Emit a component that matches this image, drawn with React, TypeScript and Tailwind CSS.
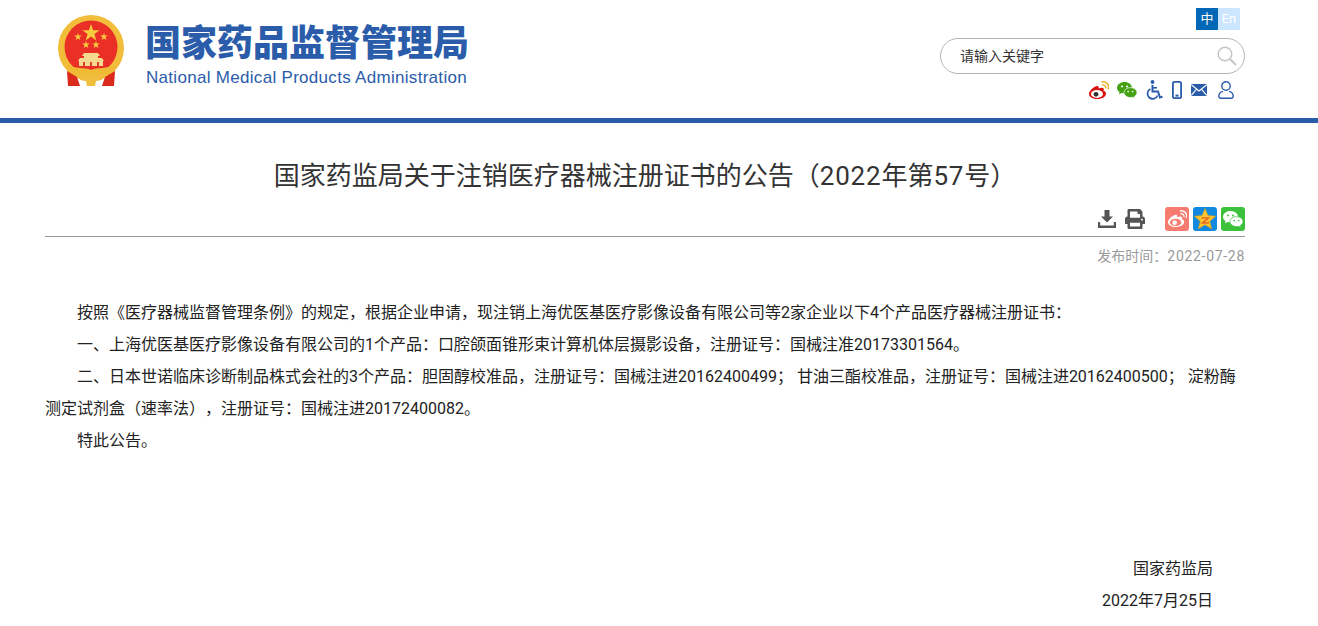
import { FaPrint } from 'react-icons/fa';

const cjk = "font-['Roboto','Noto_Sans_CJK_SC',sans-serif]";

function Emblem() {
  return (
    <svg width="68" height="74" viewBox="0 0 68 74" className="shrink-0">
      <circle cx="34" cy="33" r="33" fill="#f2bd3b" />
      <circle cx="34" cy="32" r="26.5" fill="#ea2f27" />
      <path d="M34 9 L36.1 15.2 L42.6 15.2 L37.4 19.1 L39.3 25.4 L34 21.6 L28.7 25.4 L30.6 19.1 L25.4 15.2 L31.9 15.2 Z" fill="#f7cb3f" />
      <path d="M21 18 l0.9 2.6 2.8 0 -2.2 1.7 0.8 2.7 -2.3-1.6 -2.3 1.6 0.8-2.7 -2.2-1.7 2.8 0 Z" fill="#f7cb3f" />
      <path d="M47 18 l0.9 2.6 2.8 0 -2.2 1.7 0.8 2.7 -2.3-1.6 -2.3 1.6 0.8-2.7 -2.2-1.7 2.8 0 Z" fill="#f7cb3f" />
      <path d="M29 26 l0.9 2.6 2.8 0 -2.2 1.7 0.8 2.7 -2.3-1.6 -2.3 1.6 0.8-2.7 -2.2-1.7 2.8 0 Z" fill="#f7cb3f" />
      <path d="M39 26 l0.9 2.6 2.8 0 -2.2 1.7 0.8 2.7 -2.3-1.6 -2.3 1.6 0.8-2.7 -2.2-1.7 2.8 0 Z" fill="#f7cb3f" />
      <path d="M27 38 h14 l2 3 h-2 v2 h4 l2 3 h-1 v5 h-24 v-5 h-1 l2-3 h4 v-2 h-2 Z" fill="#f5d98e" />
      <rect x="26" y="47" width="2" height="4" fill="#d9412c" />
      <rect x="33" y="47" width="2" height="4" fill="#d9412c" />
      <rect x="40" y="47" width="2" height="4" fill="#d9412c" />
      <path d="M9 50 C18 54 28 52 34 55 C40 52 50 54 59 50 L57 57 C50 62 42 58 34 61 C26 58 18 62 11 57 Z" fill="#f0ba35" />
      <path d="M10 56 L20 62 L23 71 L11 71 Z" fill="#d92a1c" />
      <path d="M58 56 L48 62 L45 71 L57 71 Z" fill="#d92a1c" />
      <path d="M20 58 L28 60 L34 58 L40 60 L48 58 L45 65 L39 66 L38 71 H30 L29 66 L23 65 Z" fill="#f0bd3c" />
    </svg>
  );
}

function WeiboIcon({ body, eye, pupil, arc, size = 20 }: { body: string; eye: string; pupil: string; arc: string; size?: number }) {
  return (
    <svg width={size} height={size * 0.9} viewBox="0 0 20 18" className="shrink-0">
      <path d="M8 5 C4 6 0 10 0 13 C0 16 4 18 8.5 18 C13.5 18 17 15.5 17 12.5 C17 11 15.5 10 14.5 9.8 C15 8.5 15 7.5 14 7 C13 6.4 11 7 9.5 7.6 C10 6 9.8 4.7 8 5 Z" fill={body} />
      <ellipse cx="8" cy="13" rx="6" ry="3.9" fill={eye} />
      <circle cx="7" cy="13.3" r="2.4" fill={pupil} />
      <path d="M13 4 C15.2 3.4 17.4 5.4 16.8 7.6" fill="none" stroke={arc} strokeWidth="1.3" />
      <path d="M12.6 1 C17 0.2 20.8 3.6 19.3 8.2" fill="none" stroke={arc} strokeWidth="1.5" />
    </svg>
  );
}

function WechatIcon({ body, eye, size = 20 }: { body: string; eye: string; size?: number }) {
  return (
    <svg width={size} height={size * 0.85} viewBox="0 0 20 17" className="shrink-0">
      <path d="M7.5 0 C3.4 0 0 2.6 0 5.8 C0 7.6 1 9.1 2.6 10.2 L2 12.4 L4.5 11.1 C5.5 11.4 6.5 11.6 7.5 11.6 C11.6 11.6 15 9 15 5.8 C15 2.6 11.6 0 7.5 0 Z" fill={body} />
      <circle cx="5" cy="4.5" r="1" fill={eye} />
      <circle cx="10" cy="4.5" r="1" fill={eye} />
      <path d="M13.5 5.6 C10 5.6 7 7.8 7 10.6 C7 13.4 10 15.6 13.5 15.6 C14.2 15.6 14.9 15.5 15.6 15.3 L17.8 16.6 L17.3 14.6 C18.9 13.6 20 12.2 20 10.6 C20 7.8 17 5.6 13.5 5.6 Z" fill={body} stroke={eye} strokeWidth="0.7" />
      <circle cx="11.2" cy="9.5" r="0.85" fill={eye} />
      <circle cx="15.6" cy="9.5" r="0.85" fill={eye} />
    </svg>
  );
}

function AccessIcon() {
  return (
    <svg width="17" height="20" viewBox="0 0 17 20" fill="none" stroke="#2a5caa" className="shrink-0">
      <circle cx="6.5" cy="2" r="1.9" fill="#2a5caa" stroke="none" />
      <path d="M6.5 5 V11.5 H12 L14 17.5 L16.5 16.6" strokeWidth="2" />
      <path d="M6.5 7.8 H11" strokeWidth="1.6" />
      <path d="M4.4 9 A5.2 5.2 0 1 0 11.6 15.5" strokeWidth="1.7" />
    </svg>
  );
}

function PhoneIcon() {
  return (
    <svg width="10" height="18" viewBox="0 0 10 18" className="shrink-0">
      <rect x="0.9" y="0.9" width="8.2" height="16.2" rx="1.6" fill="none" stroke="#2a5caa" strokeWidth="1.8" />
      <rect x="3.5" y="13.6" width="3" height="2" fill="#2a5caa" />
    </svg>
  );
}

function MailIcon() {
  return (
    <svg width="16" height="12" viewBox="0 0 16 12" className="shrink-0">
      <rect width="16" height="12" rx="0.8" fill="#2a5caa" />
      <path d="M0.3 0.8 L8 7 L15.7 0.8 M0.3 11.3 L5.6 5.2 M15.7 11.3 L10.4 5.2" fill="none" stroke="#fff" strokeWidth="1.1" />
    </svg>
  );
}

function UserIcon() {
  return (
    <svg width="16" height="18" viewBox="0 0 16 18" fill="none" stroke="#2a5caa" strokeWidth="1.4" className="shrink-0">
      <circle cx="8" cy="5" r="4.2" />
      <path d="M5 10.4 C2.5 11 0.8 12.6 0.8 15 C0.8 16.4 1.5 17.2 3 17.2 H13 C14.5 17.2 15.2 16.4 15.2 15 C15.2 12.6 13.5 11 11 10.4" />
    </svg>
  );
}

function DownloadIcon() {
  return (
    <svg width="18" height="18" viewBox="0 0 18 18" className="shrink-0" fill="#555">
      <path d="M6.5 0 H11.5 V6.5 H15 L9 12.5 L3 6.5 H6.5 Z" />
      <path d="M0 12 H2.2 V15.5 H15.8 V12 H18 V18 H0 Z" />
    </svg>
  );
}

function StarIcon() {
  return (
    <svg width="24" height="24" viewBox="0 0 24 24" className="shrink-0 rounded-[3px]">
      <rect width="24" height="24" fill="#1289e0" />
      <path d="M12 1.5 L15 8.6 L22.6 9.2 L16.8 14.2 L18.6 21.8 L12 17.8 L5.4 21.8 L7.2 14.2 L1.4 9.2 L9 8.6 Z" fill="#fbc52f" stroke="#d99a1a" strokeWidth="0.6" />
      <path d="M8.5 11 H15.5 L9.5 16 H16" fill="none" stroke="#e9692a" strokeWidth="1.6" />
    </svg>
  );
}

export default function App() {
  return (
    <div className={`${cjk} h-[626px] overflow-hidden bg-white [text-spacing-trim:space-all]`}>
      {/* Header */}
      <header className="h-[123px] border-b-[5px] border-[#2a5caa]">
        <div className="ml-[57px] flex w-[1188px] justify-between">
          <div className="flex pt-[15px]">
            <Emblem />
            <div className="ml-[20px] flex w-[322px] flex-col pt-[6px] text-[#2a5caa]">
              <span className="text-[36px] leading-[46px] font-black whitespace-nowrap">国家药品监督管理局</span>
              <span className="mt-[1px] pl-[1px] text-[17px] leading-[20px] tracking-[0.3px] whitespace-nowrap font-['Liberation_Sans',sans-serif]">National Medical Products Administration</span>
            </div>
          </div>
          <div className="flex w-[305px] flex-col items-end pt-[8px]">
            <div className="mr-[5px] flex text-[13px] leading-[22px] text-white">
              <span className="h-[22px] w-[22px] bg-[#0068b7] text-center">中</span>
              <span className="h-[22px] w-[22px] bg-[#cce6ff] text-center">En</span>
            </div>
            <div className="mt-[8px] flex h-[36px] w-[305px] items-center justify-between rounded-full border border-[#b5b5b5] pr-[7px] pl-[19px] text-[14px] text-[#333]">
              <span>请输入关键字</span>
              <svg width="20" height="20" viewBox="0 0 20 20" fill="none" stroke="#c4c4c4">
                <circle cx="8" cy="8" r="6.8" strokeWidth="1.4" />
                <path d="M13 13 L19 19" strokeWidth="1.8" />
              </svg>
            </div>
            <div className="mt-[6px] mr-[11px] flex h-[20px] items-center text-[#2a5caa]">
              <WeiboIcon body="#d8130f" eye="#ffffff" pupil="#333333" arc="#eda91d" />
              <span className="ml-[8px]">
                <WechatIcon body="#46a215" eye="#ffffff" />
              </span>
              <span className="ml-[9px]">
                <AccessIcon />
              </span>
              <span className="ml-[9px]">
                <PhoneIcon />
              </span>
              <span className="ml-[9px]">
                <MailIcon />
              </span>
              <span className="ml-[11px]">
                <UserIcon />
              </span>
            </div>
          </div>
        </div>
      </header>

      <main className="ml-[45px] w-[1200px]">
        <h1 className="pt-[35px] text-center text-[26px] leading-[36px] font-normal text-[#333]">
          国家药监局关于注销医疗器械注册证书的公告（<span className="tracking-[0.8px]">2022</span>年第<span className="tracking-[0.8px]">57</span>号）
        </h1>

        {/* Toolbar */}
        <div className="mt-[13px] flex h-[30px] items-start justify-end border-b border-[#999]">
          <span className="mt-[3px]">
            <DownloadIcon />
          </span>
          <FaPrint size={20} color="#555" className="mt-[2px] ml-[9px]" />
          <span className="ml-[20px] flex h-[24px] w-[24px] items-center justify-center rounded-[3px] bg-[#f77c6f]">
            <WeiboIcon body="#ffffff" eye="#f77c6f" pupil="#ffffff" arc="#ffffff" size={19} />
          </span>
          <span className="ml-[4px]">
            <StarIcon />
          </span>
          <span className="ml-[4px] flex h-[24px] w-[24px] items-center justify-center rounded-[3px] bg-[#3cc13c]">
            <WechatIcon body="#ffffff" eye="#3cc13c" />
          </span>
        </div>

        <p className="mt-[9px] text-right text-[14px] leading-[20px] text-[#999]">
          发布时间：<span className="tracking-[0.7px]">2022-07-28</span>
        </p>

        {/* Article */}
        <article className="mt-[31px] text-[16px] leading-[32px] text-[#222]">
          <p className="indent-[32px]">按照《医疗器械监督管理条例》的规定，根据企业申请，现注销上海优医基医疗影像设备有限公司等2家企业以下4个产品医疗器械注册证书：</p>
          <p className="indent-[32px]">一、上海优医基医疗影像设备有限公司的1个产品：口腔颌面锥形束计算机体层摄影设备，注册证号：国械注准20173301564。</p>
          <p className="indent-[32px]">二、日本世诺临床诊断制品株式会社的3个产品：胆固醇校准品，注册证号：国械注进20162400499； 甘油三酯校准品，注册证号：国械注进20162400500； 淀粉酶测定试剂盒（速率法），注册证号：国械注进20172400082。</p>
          <p className="indent-[32px]">特此公告。</p>
          <p className="mt-[96px] pr-[32px] text-right">国家药监局</p>
          <p className="pr-[32px] text-right">2022年7月25日</p>
        </article>
      </main>
    </div>
  );
}
